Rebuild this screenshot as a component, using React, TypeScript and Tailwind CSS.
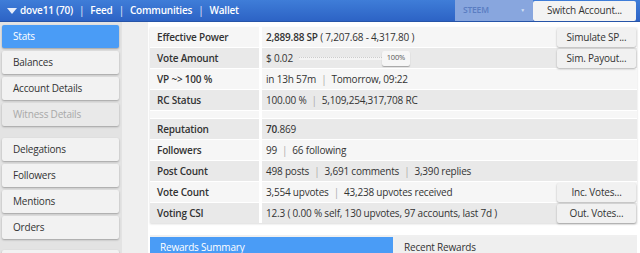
import React from 'react';

const font = { fontFamily: '"Open Sans", "Liberation Sans", sans-serif' };

const SideButton: React.FC<{ label?: string; active?: boolean; disabled?: boolean }> = ({ label, active, disabled }) => {
  const tone = active
    ? 'bg-[#4a9cf6] text-white'
    : disabled
      ? 'bg-[#e9e9e9] text-[#a8a8a8]'
      : 'bg-[#f2f2f2] text-[#333]';
  return <div className={`shrink-0 ml-[2px] w-[117px] h-[23px] flex items-center pl-[11px] rounded-[2px] shadow-[0_1px_2px_rgba(0,0,0,0.3)] ${tone}`}>
    {label}
  </div>;
};

const ActionButton: React.FC<{ label: string }> = ({ label }) => (
  <div className="w-[79px] h-[19px] flex items-center justify-center bg-[#f1f1f1] text-[#333] rounded-[2px] shadow-[0_1px_2px_rgba(0,0,0,0.3)]">
    {label}
  </div>
);

const Sep = () => <span className="text-[#aaa] mx-[5px]">|</span>;
const TopSep = () => <span className="text-[#c9d8f2] mx-[6px]">|</span>;

const Row: React.FC<{ label: string; dark?: boolean; action?: string; children?: React.ReactNode }> = ({ label, dark, action, children }) => (
  <div className={`flex h-[20px] mb-[1px] ${dark ? 'bg-[#e9e9e9]' : 'bg-[#f6f6f6]'}`}>
    <div className="w-[109px] pl-[7px] flex items-center font-semibold text-[#333]">{label}</div>
    <div className="w-[3px] bg-white" />
    <div className="flex-1 flex items-center pl-[4px] pr-[1px] text-[#333]">
      <div className="flex-1 flex items-center">{children}</div>
      {action && <ActionButton label={action} />}
    </div>
  </div>
);

const App: React.FC = () => {
  return <div className="w-[640px] h-[253px] overflow-hidden flex flex-col bg-white text-[10px] tracking-[-0.2px]" style={font}>
    {/* Top bar */}
    <div className="h-[22px] shrink-0 flex items-center bg-gradient-to-b from-[#3f7dd8] to-[#2d63c5] border-b border-[#2654a8]">
      <div className="flex items-center pl-[7px] text-white font-semibold">
        <svg width="10" height="8" viewBox="0 0 10 8" className="mr-[3px]"><path d="M0 1 L10 1 L5 7 Z" fill="#e8eefa" /></svg>
        <span>dove11 (70)</span><TopSep /><span>Feed</span><TopSep /><span>Communities</span><TopSep /><span>Wallet</span>
      </div>
      <div className="flex-1" />
      <div className="w-[78px] h-full flex items-center justify-between px-[8px] bg-[#88a6de] text-[#5a7dc2] text-[8.5px] font-semibold">
        <span>STEEM</span>
        <span className="text-[5px] text-[#d5e0f4]">▼</span>
      </div>
      <div className="w-[103px] h-[20px] mr-[4px] flex items-center justify-center bg-[#f3f3f3] text-[#333] rounded-[2px]">
        Switch Account...
      </div>
    </div>
    <div className="flex flex-1 min-h-0">
      {/* Sidebar */}
      <div className="w-[122px] bg-[#e3e3e3] pt-[3px] flex flex-col gap-[3px]">
        <SideButton label="Stats" active />
        <SideButton label="Balances" />
        <SideButton label="Account Details" />
        <SideButton label="Witness Details" disabled />
        <div className="h-[6px] shrink-0" />
        <SideButton label="Delegations" />
        <SideButton label="Followers" />
        <SideButton label="Mentions" />
        <SideButton label="Orders" />
        <div className="h-[5px] shrink-0" />
        <SideButton />
      </div>
      <div className="w-[26px] bg-[#efefef]" />
      {/* Main */}
      <div className="flex-1 pt-[5px] pl-[2px] pr-[3px] bg-white">
        <div className="shadow-[0_1px_2px_rgba(0,0,0,0.15)]">
          <Row label="Effective Power" action="Simulate SP...">
            <span className="font-semibold">2,889.88 SP</span>&nbsp;( 7,207.68 - 4,317.80 )
          </Row>
          <Row label="Vote Amount" dark action="Sim. Payout...">
            <span>$ 0.02</span>
            <div className="ml-[6px] w-[83px] h-[3px] border-t border-dotted border-[#ccc] bg-[#f4f4f4]" />
            <div className="w-[28px] h-[15px] flex items-center justify-center bg-[#f6f6f6] text-[7.5px] text-[#555] rounded-[2px] shadow-[0_1px_1px_rgba(0,0,0,0.3)]">100%</div>
          </Row>
          <Row label="VP ~> 100 %">
            in 13h 57m<Sep />Tomorrow, 09:22
          </Row>
          <Row label="RC Status" dark>
            100.00 %<Sep />5,109,254,317,708 RC
          </Row>
          <div className="flex h-[7px] mb-[1px] bg-[#f6f6f6]">
            <div className="w-[109px]" />
            <div className="w-[3px] bg-white" />
          </div>
          <Row label="Reputation" dark>
            <span className="font-semibold">70</span>.869
          </Row>
          <Row label="Followers">
            99<Sep />66 following
          </Row>
          <Row label="Post Count" dark>
            498 posts<Sep />3,691 comments<Sep />3,390 replies
          </Row>
          <Row label="Vote Count" action="Inc. Votes...">
            3,554 upvotes<Sep />43,238 upvotes received
          </Row>
          <Row label="Voting CSI" dark action="Out. Votes...">
            12.3 ( 0.00 % self, 130 upvotes, 97 accounts, last 7d )
          </Row>
        </div>
        <div className="mt-[12px] pt-[2px] bg-[#f0f0f0] flex gap-[2px]">
          <div className="w-[243px] h-[20px] pl-[10px] flex items-center bg-[#4a9cf6] text-white">Rewards Summary</div>
          <div className="flex-1 h-[20px] pl-[9px] flex items-center bg-[#efefef] text-[#333]">Recent Rewards</div>
        </div>
      </div>
    </div>
  </div>;
};

export default App;
